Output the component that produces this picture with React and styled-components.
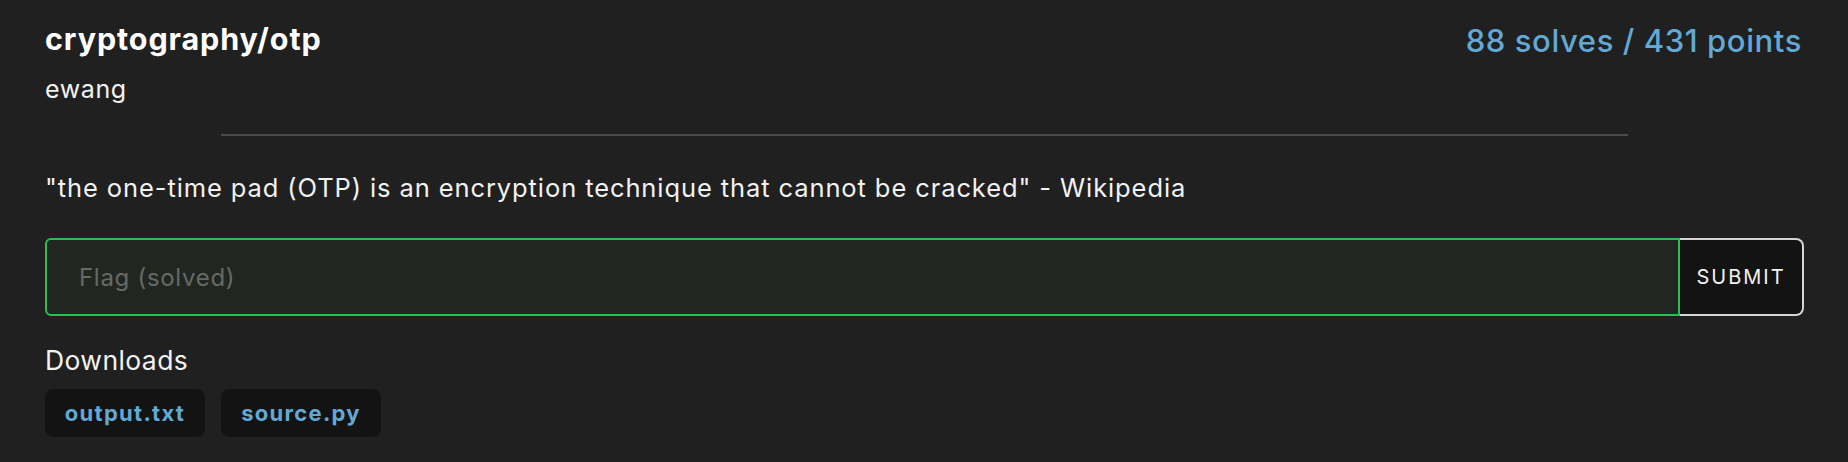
import React from 'react';
import styled, { createGlobalStyle } from 'styled-components';

const GlobalStyle = createGlobalStyle`
  html, body {
    margin: 0;
    background: #202020;
  }
  body {
    font-family: Inter, "Noto Sans", "Liberation Sans", sans-serif;
    color: #f2f2f2;
    -webkit-font-smoothing: antialiased;
  }
`;

const Card = styled.div`
  padding: 22px 44px 26px 45px;
`;

const Header = styled.div`
  display: flex;
  justify-content: space-between;
  align-items: flex-start;
`;

const Title = styled.h2`
  margin: 0;
  font-size: 30.5px;
  line-height: 34px;
  font-weight: 700;
  letter-spacing: 0.9px;
  color: #ffffff;
`;

const Author = styled.div`
  margin-top: 18px;
  font-size: 25px;
  line-height: 30px;
  letter-spacing: 0.6px;
  color: #f2f2f2;
`;

const Points = styled.div`
  margin: 1px 2px 0 0;
  font-size: 31px;
  line-height: 36px;
  font-weight: 500;
  letter-spacing: 0.6px;
  color: #62a9d6;
`;

const Divider = styled.hr`
  width: 80%;
  margin: 30px auto 0;
  border: none;
  border-top: 2px solid #4b4b4b;
`;

const Description = styled.p`
  margin: 37px 0 0;
  font-size: 25.5px;
  line-height: 30px;
  letter-spacing: 0.9px;
  color: #f2f2f2;
`;

const FlagForm = styled.form`
  display: flex;
  margin-top: 35px;
  height: 78px;
`;

const FlagInput = styled.input`
  flex: 1;
  min-width: 0;
  box-sizing: border-box;
  height: 100%;
  padding: 0 32px;
  border: 2px solid #2ebd54;
  border-radius: 6px 0 0 6px;
  background: #212621;
  font-family: inherit;
  font-size: 24px;
  letter-spacing: 0.7px;
  color: #f2f2f2;
  outline: none;
  &::placeholder {
    color: #666a66;
  }
`;

const SubmitButton = styled.button`
  box-sizing: border-box;
  width: 124px;
  height: 100%;
  border: 2px solid #d4d4d4;
  border-left: none;
  border-radius: 0 8px 8px 0;
  background: #131313;
  color: #f2f2f2;
  font-family: inherit;
  font-size: 20px;
  letter-spacing: 2px;
  cursor: pointer;
`;

const SectionLabel = styled.div`
  margin-top: 29px;
  font-size: 26.5px;
  line-height: 30px;
  letter-spacing: 0.4px;
  color: #f2f2f2;
`;

const DownloadList = styled.div`
  display: flex;
  gap: 16px;
  margin-top: 14px;
`;

const DownloadChip = styled.a`
  display: flex;
  align-items: center;
  justify-content: center;
  width: 160px;
  height: 48px;
  border-radius: 8px;
  background: #131313;
  color: #62a9d6;
  font-size: 22px;
  font-weight: 700;
  letter-spacing: 1.3px;
  text-decoration: none;
`;

const files = ['output.txt', 'source.py'];

export default function App() {
  return (
    <>
      <GlobalStyle />
      <Card>
        <Header>
          <div>
            <Title>cryptography/otp</Title>
            <Author>ewang</Author>
          </div>
          <Points>88 solves / 431 points</Points>
        </Header>
        <Divider />
        <Description>
          "the one-time pad (OTP) is an encryption technique that cannot be cracked" - Wikipedia
        </Description>
        <FlagForm onSubmit={(e) => e.preventDefault()}>
          <FlagInput type="text" placeholder="Flag (solved)" />
          <SubmitButton type="submit">SUBMIT</SubmitButton>
        </FlagForm>
        <SectionLabel>Downloads</SectionLabel>
        <DownloadList>
          {files.map((f) => (
            <DownloadChip key={f} href="#">{f}</DownloadChip>
          ))}
        </DownloadList>
      </Card>
    </>
  );
}
